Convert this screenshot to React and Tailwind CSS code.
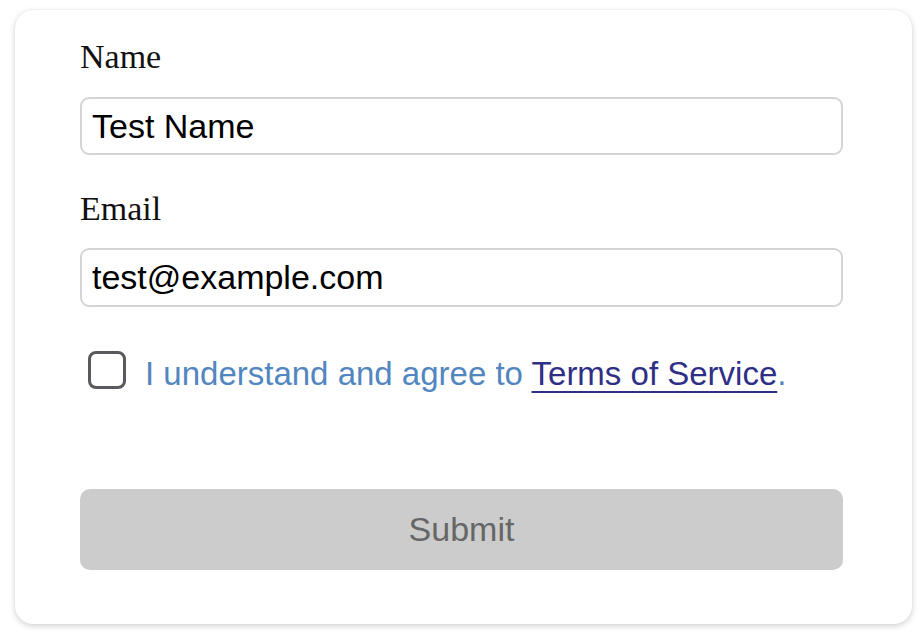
import React, { useState } from "react";

const App = () => {
  const [name, setName] = useState("Test Name");
  const [email, setEmail] = useState("test@example.com");
  const [agreed, setAgreed] = useState(false);

  return (
    <div className="min-h-screen bg-white pt-[10px] pl-[15px]">
      <form
        onSubmit={(e) => e.preventDefault()}
        className="w-[897px] h-[614px] bg-white rounded-[18px] shadow-[0_2px_6px_rgba(0,0,0,0.18),0_0_1px_rgba(0,0,0,0.12)] pt-[28px] pl-[65px]"
      >
        <label
          htmlFor="name"
          className="block text-[34px] leading-[38px] text-[#111] font-['Liberation_Serif',serif]"
        >
          Name
        </label>
        <input
          id="name"
          type="text"
          value={name}
          onChange={(e) => setName(e.target.value)}
          className="mt-[21px] block w-[763px] h-[58px] border-2 border-[#d4d4d4] rounded-[9px] px-[10px] text-[34px] text-black font-['Liberation_Sans',sans-serif] outline-none"
        />

        <label
          htmlFor="email"
          className="block mt-[35px] text-[34px] leading-[38px] text-[#111] font-['Liberation_Serif',serif]"
        >
          Email
        </label>
        <input
          id="email"
          type="email"
          value={email}
          onChange={(e) => setEmail(e.target.value)}
          className="mt-[20px] block w-[763px] h-[59px] border-2 border-[#d4d4d4] rounded-[9px] px-[10px] text-[34px] text-black font-['Liberation_Sans',sans-serif] outline-none"
        />

        <div className="mt-[44px] flex items-start pl-[8px]">
          <input
            type="checkbox"
            checked={agreed}
            onChange={(e) => setAgreed(e.target.checked)}
            className="appearance-none w-[38px] h-[38px] border-[3px] border-[#5a5a5e] rounded-[8px] bg-white shrink-0"
          />
          <span className="ml-[19px] pt-[4px] text-[33px] leading-[38px] text-[#5286bf] font-['Liberation_Sans',sans-serif]">
            I understand and agree to{" "}
            <a
              href="#"
              className="text-[#2f2f85] underline decoration-2 underline-offset-[6px]"
            >
              Terms of Service
            </a>
            .
          </span>
        </div>

        <button
          type="submit"
          disabled={!agreed}
          className="mt-[96px] block w-[763px] h-[81px] rounded-[10px] bg-[#cccccc] text-[34px] text-[#666] font-['Liberation_Sans',sans-serif]"
        >
          Submit
        </button>
      </form>
    </div>
  );
};

export default App;
